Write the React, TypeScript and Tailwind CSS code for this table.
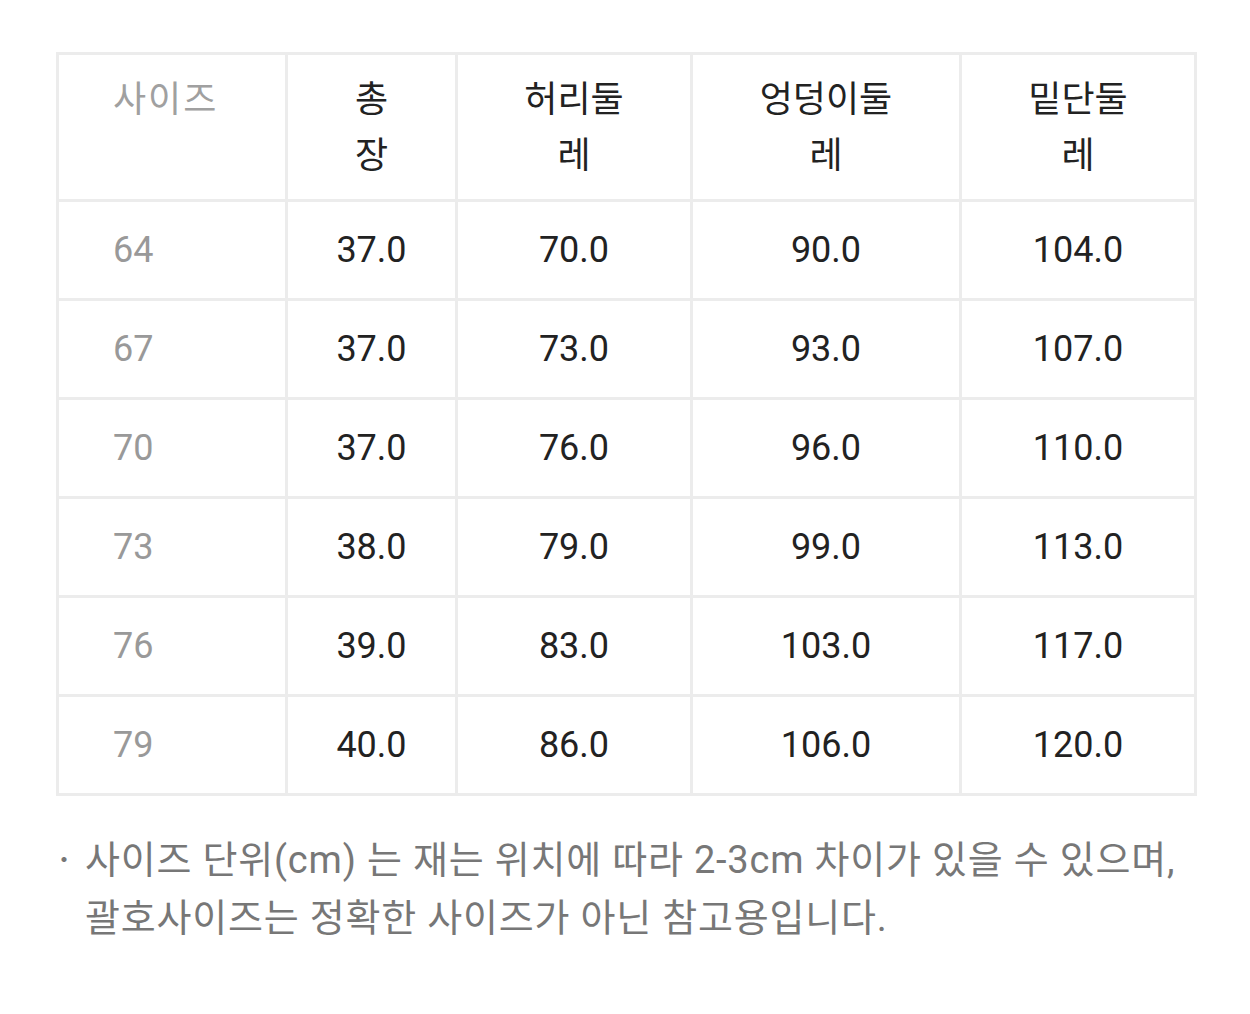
const headers = [
  ["총", "장"],
  ["허리둘", "레"],
  ["엉덩이둘", "레"],
  ["밑단둘", "레"],
];

const rows = [
  ["64", "37.0", "70.0", "90.0", "104.0"],
  ["67", "37.0", "73.0", "93.0", "107.0"],
  ["70", "37.0", "76.0", "96.0", "110.0"],
  ["73", "38.0", "79.0", "99.0", "113.0"],
  ["76", "39.0", "83.0", "103.0", "117.0"],
  ["79", "40.0", "86.0", "106.0", "120.0"],
];

export default function App() {
  return (
    <div className="min-h-[1014px] w-[1250px] bg-white pt-[52px] pl-[56px] font-['Roboto','Noto_Sans_CJK_KR',sans-serif]">
      {/* size table */}
      <table className="w-[1141px] table-fixed border-collapse border-[3px] border-[#ececec] text-[36px]">
        <colgroup>
          <col className="w-[229px]" />
          <col className="w-[170px]" />
          <col className="w-[235px]" />
          <col className="w-[269px]" />
          <col className="w-[235px]" />
        </colgroup>
        <thead>
          <tr className="h-[147px]">
            <th className="border-[3px] border-[#ececec] pl-[54px] pt-[17px] text-left align-top text-[36px] font-normal leading-[56px] tracking-[2px] text-[#a0a0a0]">
              사이즈
            </th>
            {headers.map((h, i) => (
              <th
                key={i}
                className="border-[3px] border-[#ececec] pt-[17px] text-center align-top text-[36px] font-normal leading-[56px] text-[#222]"
              >
                {h[0]}
                <br />
                {h[1]}
              </th>
            ))}
          </tr>
        </thead>
        <tbody>
          {rows.map((r) => (
            <tr key={r[0]} className="h-[99px]">
              <td className="border-[3px] border-[#ececec] pl-[54px] text-left align-middle leading-none text-[#999]">
                {r[0]}
              </td>
              {r.slice(1).map((v, j) => (
                <td
                  key={j}
                  className="border-[3px] border-[#ececec] text-center align-middle leading-none text-[#222]"
                >
                  {v}
                </td>
              ))}
            </tr>
          ))}
        </tbody>
      </table>

      {/* note */}
      <div className="mt-[35px] flex text-[38px] leading-[58px] text-[#777]">
        <span className="-ml-[4px] w-[33px] shrink-0 text-[24px]">・</span>
        <p className="tracking-[0.8px]">
          사이즈 단위(cm) 는 재는 위치에 따라 2-3cm 차이가 있을 수 있으며,
          <br />
          괄호사이즈는 정확한 사이즈가 아닌 참고용입니다.
        </p>
      </div>
    </div>
  );
}
